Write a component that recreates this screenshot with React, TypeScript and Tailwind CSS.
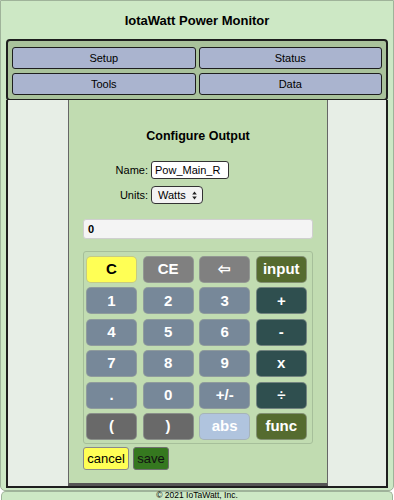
import React from 'react';

type Key = { label: string; cls: string };

const digit = 'bg-[#778899] text-white';
const oper = 'bg-[#2f4f4f] text-white';
const grey = 'bg-[#808080] text-white';
const olive = 'bg-[#556b2f] text-white';
const dim = 'bg-[#696969] text-white';

const keys: Key[] = [
  { label: 'C', cls: 'bg-[#ffff55] text-black' },
  { label: 'CE', cls: grey },
  { label: '⇦', cls: grey },
  { label: 'input', cls: olive },
  { label: '1', cls: digit },
  { label: '2', cls: digit },
  { label: '3', cls: digit },
  { label: '+', cls: oper },
  { label: '4', cls: digit },
  { label: '5', cls: digit },
  { label: '6', cls: digit },
  { label: '-', cls: oper },
  { label: '7', cls: digit },
  { label: '8', cls: digit },
  { label: '9', cls: digit },
  { label: 'x', cls: oper },
  { label: '.', cls: digit },
  { label: '0', cls: digit },
  { label: '+/-', cls: digit },
  { label: '÷', cls: oper },
  { label: '(', cls: dim },
  { label: ')', cls: dim },
  { label: 'abs', cls: 'bg-[#b0c4de] text-white' },
  { label: 'func', cls: olive },
];

const navItems = ['Setup', 'Status', 'Tools', 'Data'];

const App: React.FC = () => {
  return (
    <div className="w-[394px] h-[500px] overflow-hidden bg-white font-['Liberation_Sans',Arial,sans-serif] text-black">
      <div className="h-[491px] bg-[#cde8c5] border border-[#9fb39a] rounded-b-[5px] px-[5px] flex flex-col">
        {/* Header */}
        <div className="h-[38px] flex items-center justify-center">
          <h1 className="text-[13px] font-bold pt-[1px]">IotaWatt Power Monitor</h1>
        </div>

        {/* Nav */}
        <div className="h-[62px] border-2 border-[#1e1e1e] rounded-[4px] bg-[#a9c29b] pt-[6px] pb-[4px] px-[4px] grid grid-cols-2 gap-x-[3px] gap-y-[4px]">
          {navItems.map((item) => (
            <div
              key={item}
              className="bg-[#aab4cf] border border-[#1e1e1e] rounded-[3px] flex items-center justify-center text-[11px]"
            >
              {item}
            </div>
          ))}
        </div>

        {/* Content */}
        <div className="h-[388px] -mt-[1px] border-2 border-t-0 border-[#1e1e1e] bg-[#e7eee6] flex justify-center">
          <div className="w-[260px] ml-[2px] h-[386px] bg-[#c1dcb1] border-x border-[#666] border-b-[3px] border-b-[#555] flex flex-col items-center">
            <h2 className="text-[12.5px] leading-[16px] font-bold mt-[28px]">Configure Output</h2>

            {/* Form */}
            <div className="self-stretch mt-[17px] flex flex-col gap-[7px]">
              <div className="flex items-center h-[18px]">
                <span className="w-[79px] text-right text-[11px]">Name:</span>
                <div className="ml-[3px] w-[78px] h-[18px] bg-white border border-[#333] rounded-[3px] px-[3px] flex items-center text-[11px]">
                  Pow_Main_R
                </div>
              </div>
              <div className="flex items-center h-[18px]">
                <span className="w-[79px] text-right text-[11px]">Units:</span>
                <div className="ml-[3px] w-[52px] h-[18px] bg-[#f3f3f3] border border-[#333] rounded-[4px] pl-[6px] pr-[5px] flex items-center justify-between text-[11px]">
                  <span>Watts</span>
                  <svg width="5" height="9" viewBox="0 0 5 9">
                    <path d="M2.5 0.5 L4.8 3.6 H0.2 Z M2.5 8.5 L4.8 5.4 H0.2 Z" fill="#222" />
                  </svg>
                </div>
              </div>
            </div>

            {/* Display */}
            <div className="mt-[15px] w-[230px] h-[20px] bg-[#f4f4f4] border border-[#cfcfcf] rounded-[3px] pl-[4px] flex items-center text-[11px] font-bold">
              0
            </div>

            {/* Keypad */}
            <div className="mt-[12px] w-[230px] border border-[#a6bf9a] rounded-[3px] pt-[4px] pb-[3px] pl-[2px] grid grid-cols-[repeat(4,51px)] auto-rows-[27px] gap-x-[5.6px] gap-y-[4.4px]">
              {keys.map((k) => (
                <div
                  key={k.label}
                  className={`${k.cls} rounded-[5px] border border-[#a0a8a0]/60 flex items-center justify-center text-[15px] font-bold`}
                >
                  {k.label}
                </div>
              ))}
            </div>

            {/* Actions */}
            <div className="self-start ml-[14px] mt-[3px] flex gap-[4px]">
              <div className="w-[46px] h-[23px] bg-[#ffff55] border border-[#8a8a8a] rounded-[3px] flex items-center justify-center text-[13px]">
                cancel
              </div>
              <div className="w-[36px] h-[23px] bg-[#35781f] border border-[#6f6f6f] rounded-[3px] flex items-center justify-center text-[13px] text-[#111]">
                save
              </div>
            </div>
          </div>
        </div>
      </div>

      {/* Footer */}
      <div className="h-[9px] mx-[1px] bg-[#cde8c5] border-x border-t border-[#9fb39a] rounded-t-[5px] flex justify-center">
        <span className="text-[8.5px] leading-[9px] -mt-[1px]">© 2021 IoTaWatt, Inc.</span>
      </div>
    </div>
  );
};

export default App;
